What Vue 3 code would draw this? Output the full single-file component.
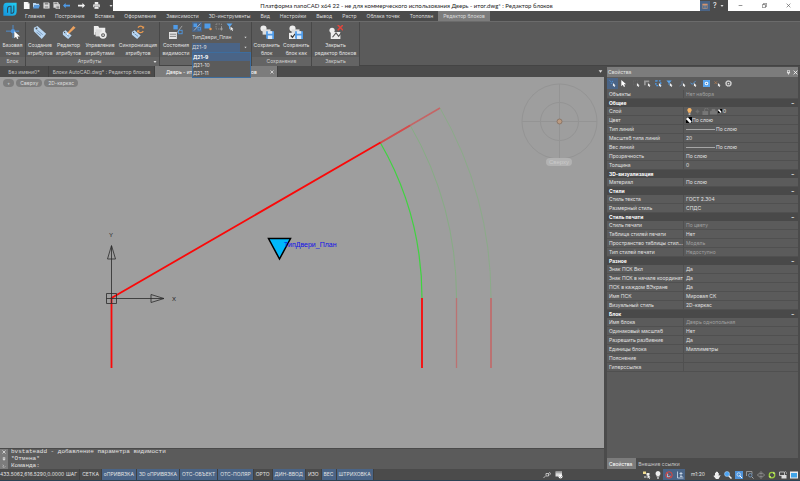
<script setup>
import { ref } from 'vue'

const cursor = '<path d="M9 7v8l2-2 1.500 3 1.500-1-1.500-2.500h2.500z" fill="#f4f4f4"/>'
const tag = '<path d="M1 3l4-2 10 9-5 6L1 7z" fill="#b9d7f3"/><path d="M5 6l6 5M4 8l5 4" stroke="#6c8caf" stroke-width="1"/><circle cx="4" cy="4" r="1.100" fill="#555"/>'
const tagSmall = '<path d="M1 8l3-2 7 6-4 4-6-5z" fill="#b9d7f3"/><path d="M4 10l4 3" stroke="#6c8caf" stroke-width="1"/><circle cx="3" cy="8.500" r=".8" fill="#555"/>'
const shapes = '<circle cx="4" cy="4" r="3.500" fill="#eee"/><rect x="3" y="5" width="9" height="6" fill="#ddd"/>'
const floppy = '<path d="M7 7h9v9H8l-1-1z" fill="#4f9be8"/><rect x="9" y="7" width="5" height="3" fill="#dceafa"/><rect x="9" y="12" width="5" height="4" fill="#dceafa"/>'
const icons = {
  point: '<path d="M8 0v15M0 7h15" stroke="#4f93da" stroke-width="1"/><circle cx="8" cy="7" r="2.500" fill="#4f93da"/><path d="M9.500 7v8l2-1.500 1.200 2.500 1.500-.7-1.200-2.300H16z" fill="#fff"/>',
  tag,
  tagEdit: tagSmall + '<path d="M6 9L13 1l2.500 2L8 10z" fill="#eca25f"/><path d="M6 9l-1 3 3-2z" fill="#fff"/>',
  tagManage: '<path d="M1 1h5l1 2h7v5H3v3H1z" fill="#eee"/><rect x="3" y="5" width="7" height="8" fill="#ddd"/><circle cx="11.500" cy="11.500" r="3.200" fill="#555" stroke="#eee" stroke-width="2"/><circle cx="11.500" cy="11.500" r="1" fill="#eee"/>',
  tagSync: tagSmall + '<path d="M8 3a3.500 3.500 0 0 1 6 0M14 7a3.500 3.500 0 0 1-6 0" fill="none" stroke="#e99a50" stroke-width="1.500"/><path d="M15 1v3h-3zM7 9V6h3z" fill="#e99a50"/>',
  states: '<rect x="5" y="0" width="5" height="5" fill="#4f9be8"/><path d="M15 1L9 9" stroke="#aaa"/><rect x="11" y="6" width="4" height="4" fill="none" stroke="#4f9be8"/><rect x="0" y="8" width="9" height="8" fill="#e4e4e4"/><path d="M1 10.500h7M1 13h7" stroke="#777"/>',
  saveBlock: shapes + floppy,
  saveAs: shapes + '<rect x="0" y="9" width="8" height="7" fill="#eee"/><path d="M2 12l2 2 3-4" fill="none" stroke="#333" stroke-width="1.400"/>' + floppy,
  closeBlock: '<circle cx="3.500" cy="6" r="3" fill="#eee"/><path d="M2 8h11v8H2z" fill="#eee"/><path d="M4 14l4-5 3 4 3-4" fill="none" stroke="#555" stroke-width="1.300"/><path d="M10 0l6 6M16 0l-6 6" stroke="#e0453c" stroke-width="1.800"/>',
  half: '<rect x="1" y="1" width="7" height="7" fill="#4f9be8"/><path d="M15 1L2 15" stroke="#ccc" stroke-width="1.500"/><rect x="10" y="9" width="5" height="5" fill="none" stroke="#4f9be8" stroke-width="1.500"/>',
  full: '<rect x="1" y="1" width="12" height="10" fill="#4f9be8"/><circle cx="13" cy="12" r="2.500" fill="#e99a50"/>',
  dashed: '<rect x="2" y="2" width="11" height="10" fill="none" stroke="#999" stroke-width="1.500" stroke-dasharray="3 2"/><path d="M13 8v7M10 12h6" stroke="#aaa" stroke-width="1.500"/>',
  funnel: '<path d="M1 1h12L8 7v6L6 11V7z" fill="#5ba6ee"/>' + cursor,
  page: '<path d="M2 0h9l4 4v12H2z" fill="#f8f8f8"/><path d="M11 0v4h4" fill="#bbb"/>',
  folder: '<path d="M0 2h6l2 2h6v3H4l-4 7z" fill="#b9d7f3"/><path d="M4 7h12l-3 8H0z" fill="#5799dc"/>',
  save: '<path d="M1 1h12l2 2v12H1z" fill="#ddd"/><rect x="4" y="1" width="8" height="5" fill="#888"/><rect x="4" y="9" width="8" height="6" fill="#aaa"/>',
  saveAll: '<path d="M1 0h10l2 2v11H1z" fill="#ddd"/><rect x="3" y="1" width="7" height="4" fill="#888"/><path d="M6 5h10v11H6z" fill="#ccc"/><rect x="8" y="10" width="6" height="5" fill="#888"/>',
  undo: '<path d="M0 8l6-6v4h10v4H6v4z" fill="#4f9be8"/>',
  redo: '<path d="M16 8l-6-6v4H0v4h10v4z" fill="#f4f4f4"/>',
  print: '<rect x="4" y="0" width="8" height="6" fill="#eee"/><rect x="0" y="5" width="16" height="7" rx="1" fill="#ccc"/><rect x="3" y="10" width="10" height="6" fill="#eee" stroke="#777"/>',
  addSel: '<path d="M1 1l5 4M4 8h3M8 2v3" stroke="#4f9be8" stroke-width="1.500"/>' + cursor,
  arrow: '<path d="M3 0v14l3.500-3 2.500 5 2.500-1.500-2.500-5h5z" fill="#fff"/>',
  frame: '<rect x="1" y="2" width="10" height="9" fill="none" stroke="#777" stroke-dasharray="2 2"/>' + cursor,
  gray: '<path d="M0 1h12v4H4v7H0z" fill="#999"/>' + cursor,
  blueFrame: '<path d="M2 2h11v11H2z" fill="none" stroke="#4f9be8" stroke-width="3" stroke-dasharray="4 3"/>' + cursor,
  line: '<path d="M7 2v8L1 14" fill="none" stroke="#6d87a5" stroke-width="1.500"/>' + cursor,
  check: '<path d="M1 6l4 4 8-8" fill="none" stroke="#4f9be8" stroke-width="2"/>' + cursor,
  target: '<rect width="16" height="16" fill="#5ba6ee"/><circle cx="8" cy="8" r="4" fill="#fff"/><circle cx="8" cy="8" r="1.800" fill="#4780bd"/>',
  cross: '<path d="M1 3l6 6M7 3L1 9" stroke="#bf8252" stroke-width="1.500"/>' + cursor,
  gear: '<circle cx="8" cy="8" r="5.500" fill="#555" stroke="#ccc" stroke-width="3" /><circle cx="8" cy="8" r="7" fill="none" stroke="#ccc" stroke-width="1.500" stroke-dasharray="2 2"/><circle cx="8" cy="8" r="2" fill="#ddd"/>',
  bulb: '<path d="M8 0a5 5 0 0 1 3 9v2H5V9a5 5 0 0 1 3-9z" fill="#f3b368"/><rect x="6" y="12" width="4" height="4" fill="#bbb"/>',
  bulbWhite: '<path d="M8 0a5 5 0 0 1 3 9v2H5V9a5 5 0 0 1 3-9z" fill="#eee"/><rect x="6" y="12" width="4" height="4" fill="#aaa"/>',
  sun: '<circle cx="8" cy="8" r="3" fill="#777"/><path d="M8 2v12M2 8h12" stroke="#6c6c6c"/>',
  lock: '<rect x="1" y="7" width="13" height="9" fill="#777"/><path d="M6 7V4a4 4 0 0 1 8 0" fill="none" stroke="#777" stroke-width="2"/>',
  printer: '<rect x="4" y="2" width="8" height="5" fill="#777"/><rect x="0" y="6" width="16" height="9" rx="2" fill="#777"/>',
  swatch: '<rect width="16" height="16" fill="#000"/><path d="M1 1v5l8 9h5v-4L7 1z" fill="#fff"/><path d="M5 1h10v9z" fill="#000"/>',
  chain: '<path d="M1 14l5-5M6 9V5h5v5H6" fill="none" stroke="#ddd" stroke-width="1.500"/><path d="M11 5c4-5 5 2 2 3" fill="none" stroke="#ddd" stroke-width="1.500"/>',
  sheet: '<rect x="1" y="1" width="13" height="10" fill="#ddd"/><path d="M1 3.500h13" stroke="#555"/><circle cx="11" cy="11" r="4" fill="#fff"/><path d="M9 11l2 2 3-3" fill="none" stroke="#555"/>',
  pick: '<rect x="0" y="1" width="6" height="5" fill="#f0dc90"/><rect x="7" y="4" width="6" height="5" fill="#eee"/><path d="M2 10h5v4H2z" fill="#999"/>' + cursor,
  noSnap: '<path d="M5 4v8l6-2" fill="none" stroke="#c9d6e6" stroke-width="1.500"/><circle cx="8" cy="8" r="6.500" fill="none" stroke="#e0453c" stroke-width="2"/><path d="M3 3l10 10" stroke="#e0453c" stroke-width="1.500"/>',
  axes: '<path d="M3 1v13h12" fill="none" stroke="#dce8f5" stroke-width="1.500"/><path d="M10 2v8M7 5h6M8 11h5" stroke="#dce8f5" stroke-width="1.500"/>',
  hand: '<path d="M4 9V4h1.500v4V2H7v6V1h1.500v7V2H10v7V4h1.500v6l2.500-2 1 1-4 7H6L1 10l1-1z" fill="#eee"/>',
  zoom: '<path d="M9 9l6 6" stroke="#eee" stroke-width="3"/><circle cx="6" cy="6" r="5" fill="#4ba3f2" stroke="#c5dff9"/>',
  zoomAll: '<rect width="16" height="16" fill="#4f93da"/><path d="M9 9l5 5" stroke="#fff" stroke-width="2"/><circle cx="7.500" cy="7" r="3.500" fill="none" stroke="#dcebfa" stroke-width="1.500"/>',
  zoomWin: '<path d="M1 10V1h11v5" fill="none" stroke="#aaa" stroke-width="1.500"/><path d="M11 11l4 4" stroke="#aaa" stroke-width="2"/><circle cx="8.500" cy="8.500" r="3.500" fill="#4b4b4b" stroke="#7aa7d6" stroke-width="1.500"/>',
  orbit: '<path d="M8 1v14M5 4l3-3 3 3M5 12l3 3 3-3" fill="none" stroke="#999"/><ellipse cx="8" cy="8" rx="7" ry="3" fill="none" stroke="#999" stroke-width="1.500"/>',
  regen: '<circle cx="8" cy="8" r="5.500" fill="none" stroke="#9ccf3c" stroke-width="2.500"/><path d="M11 1l4 4-5 1zM5 15l-4-4 5-1z" fill="#c5ec75"/>',
  views: '<path d="M1 2h10v7H1z" fill="none" stroke="#ddd" stroke-width="1.500"/><rect x="5" y="8" width="10" height="7" fill="#ddd"/><path d="M12 1c3 0 3 2 3 5" fill="none" stroke="#ddd"/>',
  screen: '<rect x="0" y="1" width="16" height="14" fill="#eee"/><rect x="2" y="4" width="12" height="9" fill="#41a5e8"/>',
  panel: '<rect x="1" y="2" width="14" height="3" fill="#e99a6a"/><path d="M2 6h12v9H2z" fill="none" stroke="#d99a70" stroke-width="1.500"/><path d="M6 6v9M10 6v9" stroke="#bbb"/>',
  pin: '<path d="M5 1h6v8H5zM3 9h10M8 9v6" fill="none" stroke="#fff" stroke-width="2"/>',
  close: '<path d="M2 2l12 12M14 2L2 14" stroke="#fff" stroke-width="2.500"/>',
  wrench: '<path d="M2 3l6 4-6 3M3 13h7l4-4" fill="none" stroke="#ddd" stroke-width="1.800"/>',
  down: '<path d="M2 4h12l-6 8z" fill="#ddd"/>'
}

const quick = ['page', 'folder', 'save', 'saveAll', 'undo', 'redo', 'print']
const menu = ['Главная', 'Построение', 'Вставка', 'Оформление', 'Зависимости', '3D-инструменты', 'Вид', 'Настройки', 'Вывод', 'Растр', 'Облака точек', 'Топоплан', 'Редактор блоков']
const attrs = [
  ['tag', 'Создание', 'атрибутов'],
  ['tagEdit', 'Редактор', 'атрибутов'],
  ['tagManage', 'Управление', 'атрибутами'],
  ['tagSync', 'Синхронизация', 'атрибутов']
]
const states = ['Д21-9', 'Д21-10', 'Д21-11']
const state = ref('Д21-9')
const selTools = ['addSel', 'arrow', 'frame', 'gray', 'blueFrame', 'funnel', 'line', 'check', 'target', 'cross', 'gear']

const groups = [
  { rows: [{ n: 'Объекты', v: 'Нет набора', dim: true }] },
  {
    title: 'Общие',
    rows: [
      { n: 'Слой', v: '0', layer: true },
      { n: 'Цвет', v: 'По слою', swatch: true },
      { n: 'Тип линий', v: 'По слою', line: true },
      { n: 'Масштаб типа линий', v: '20' },
      { n: 'Вес линий', v: 'По слою', line: true },
      { n: 'Прозрачность', v: 'По слою' },
      { n: 'Толщина', v: '0' }
    ]
  },
  { title: '3D-визуализация', rows: [{ n: 'Материал', v: 'По слою' }] },
  { title: 'Стили', rows: [{ n: 'Стиль текста', v: 'ГОСТ 2.304' }, { n: 'Размерный стиль', v: 'СПДС' }] },
  {
    title: 'Стиль печати',
    rows: [
      { n: 'Стиль печати', v: 'По цвету', dim: true },
      { n: 'Таблица стилей печати', v: 'Нет' },
      { n: 'Пространство таблицы стил...', v: 'Модель', dim: true },
      { n: 'Тип стилей печати', v: 'Недоступно', dim: true }
    ]
  },
  {
    title: 'Разное',
    rows: [
      { n: 'Знак ПСК Вкл', v: 'Да' },
      { n: 'Знак ПСК в начале координат', v: 'Да' },
      { n: 'ПСК в каждом ВЭкране', v: 'Да' },
      { n: 'Имя ПСК', v: 'Мировая СК' },
      { n: 'Визуальный стиль', v: '2D-каркас' }
    ]
  },
  {
    title: 'Блок',
    rows: [
      { n: 'Имя блока', v: 'Дверь однопольная', dim: true },
      { n: 'Одинаковый масштаб', v: 'Нет' },
      { n: 'Разрешить разбиение', v: 'Да' },
      { n: 'Единицы блока', v: 'Миллиметры' },
      { n: 'Пояснение', v: '' },
      { n: 'Гиперссылка', v: '' }
    ]
  }
]

const modes = ref([
  ['ШАГ', false], ['СЕТКА', false], ['оПРИВЯЗКА', true], ['3D оПРИВЯЗКА', true], ['ОТС-ОБЪЕКТ', true],
  ['ОТС-ПОЛЯР', true], ['ОРТО', false], ['ДИН-ВВОД', true], ['ИЗО', false], ['ВЕС', true], ['ШТРИХОВКА', true]
])
const viewTools = ['hand', 'zoom', 'zoomAll', 'zoomWin', 'orbit', 'regen', 'views', 'screen']
</script>

<template>
  <div class="app">
    <header class="head">
      <svg class="logo" viewBox="0 0 40 40">
        <defs>
          <linearGradient id="lg" x1="0" y1="1" x2="1" y2="0">
            <stop offset="0" stop-color="#1593dc" />
            <stop offset="1" stop-color="#22d0f4" />
          </linearGradient>
        </defs>
        <path d="M10 2h29v25q0 12-12 12H1V13Q1 2 10 2z" fill="url(#lg)" />
        <path d="M13 31V19q0-7 7-7h3v20h3q5 0 5-6V10" fill="none" stroke="#274a60" stroke-width="3" />
      </svg>
      <div class="headmain">
        <div class="titlebar">
          <div class="quick">
            <button v-for="q in quick" :key="q" class="qbtn" :class="q" :aria-label="q">
              <svg viewBox="0 0 16 16" v-html="icons[q]"></svg>
            </button>
            <svg class="caret" viewBox="0 0 16 16" v-html="icons.down"></svg>
          </div>
          <h1 class="title">Платформа nanoCAD x64 22 - не для коммерческого использования Дверь - итог.dwg* : Редактор блоков</h1>
          <div class="help">
            <button class="on" aria-label="panel"><svg viewBox="0 0 16 16" v-html="icons.panel"></svg></button>
            <button>?</button>
            <svg class="caret" viewBox="0 0 16 16" v-html="icons.down"></svg>
          </div>
          <div class="win">
            <button aria-label="minimize"><svg viewBox="0 0 16 16"><path d="M2 8h12" stroke="#555" stroke-width="2" /></svg></button>
            <button aria-label="restore"><svg viewBox="0 0 16 16"><path d="M1 5h10v10H1zM5 5V1h10v10h-4" fill="none" stroke="#555" stroke-width="2" /></svg></button>
            <button aria-label="close"><svg viewBox="0 0 16 16"><path d="M2 2l12 12M14 2L2 14" stroke="#555" stroke-width="2" /></svg></button>
          </div>
        </div>
        <nav class="menu">
          <a v-for="(m, i) in menu" :key="m" href="#" :class="{ active: i === 12 }">{{ m }}</a>
        </nav>
      </div>
    </header>

    <section class="ribbon">
      <div class="group g-block">
        <div class="tools">
          <button class="big"><svg viewBox="0 0 16 16" v-html="icons.point"></svg><span>Базовая<br />точка</span></button>
        </div>
        <div class="gname">Блок</div>
      </div>
      <div class="group g-attr">
        <div class="tools">
          <button v-for="a in attrs" :key="a[1]" class="big"><svg viewBox="0 0 16 16" v-html="icons[a[0]]"></svg><span>{{ a[1] }}<br />{{ a[2] }}</span></button>
        </div>
        <div class="gname more">Атрибуты<svg class="caret" viewBox="0 0 16 16" v-html="icons.down"></svg></div>
      </div>
      <div class="group g-vis">
        <div class="tools">
          <button class="big"><svg viewBox="0 0 16 16" v-html="icons.states"></svg><span>Состояния<br />видимости</span></button>
          <div class="vis">
            <div class="mini">
              <button class="on" aria-label="half"><svg viewBox="0 0 16 16" v-html="icons.half"></svg></button>
              <button aria-label="full"><svg viewBox="0 0 16 16" v-html="icons.full"></svg></button>
              <button aria-label="dashed"><svg viewBox="0 0 16 16" v-html="icons.dashed"></svg></button>
              <button aria-label="filter"><svg viewBox="0 0 16 16" v-html="icons.funnel"></svg></button>
            </div>
            <div class="combo">
              <select aria-label="parameter"><option>ТипДвери_План</option></select><svg viewBox="0 0 16 16" v-html="icons.down"></svg>
            </div>
            <div class="combo open">
              <select v-model="state" aria-label="state"><option v-for="s in states" :key="s">{{ s }}</option></select><svg viewBox="0 0 16 16" v-html="icons.down"></svg>
              <ul class="drop">
                <li v-for="s in states" :key="s" :class="{ sel: s === state }" @click="state = s">{{ s }}</li>
              </ul>
            </div>
          </div>
        </div>
        <div class="gname"></div>
      </div>
      <div class="group g-save">
        <div class="tools">
          <button class="big"><svg viewBox="0 0 16 16" v-html="icons.saveBlock"></svg><span>Сохранить<br />блок</span></button>
          <button class="big"><svg viewBox="0 0 16 16" v-html="icons.saveAs"></svg><span>Сохранить<br />блок как</span></button>
        </div>
        <div class="gname">Сохранение</div>
      </div>
      <div class="group g-close">
        <div class="tools">
          <button class="big"><svg viewBox="0 0 16 16" v-html="icons.closeBlock"></svg><span>Закрыть<br />редактор блоков</span></button>
        </div>
        <div class="gname">Закрыть</div>
      </div>
    </section>

    <div class="work">
      <main class="left">
        <div class="docs">
          <button class="doc d1">Без имени0*</button>
          <button class="doc d2">Блоки AutoCAD.dwg* : Редактор блоков</button>
          <button class="doc d3 active"><span>Дверь - итог.dwg* : Редактор блоков</span><svg viewBox="0 0 16 16" v-html="icons.close"></svg></button>
          <svg class="doclist" viewBox="0 0 16 16" v-html="icons.down"></svg>
        </div>
        <div class="canvas">
          <div class="pills"><button>+</button><button>Сверху</button><button>2D-каркас</button></div>
          <svg class="drawing" viewBox="0 0 604 371" preserveAspectRatio="xMinYMin meet">
            <g fill="none">
              <g stroke="#949494" stroke-width="1">
                <circle cx="559.500" cy="44.500" r="37.500" /><circle cx="559.500" cy="44.500" r="19" />
                <path d="M522 44.500h75M559.500 7v75" />
              </g>
              <circle cx="559.500" cy="44.500" r="2.500" fill="#bb9a80" stroke="#8c7768" />
              <path d="M456.500 221A345.500 345.500 0 0 0 410 48" stroke="#86ad84" stroke-width="1" />
              <path d="M491 221A380 380 0 0 0 440 31" stroke="#8bab89" stroke-width="1" />
              <path d="M422 221A311 311 0 0 0 380.500 66" stroke="#3fd43f" stroke-width="1.200" />
              <path d="M380 66L440 31" stroke="#c56565" stroke-width="1.500" />
              <path d="M380 66L410 48.500" stroke="#d44c4c" stroke-width="1.500" />
              <path d="M456.500 221v70" stroke="#bb7272" stroke-width="1.300" />
              <path d="M491 221v70" stroke="#bb7272" stroke-width="2" />
              <path d="M422 221v70M111.500 291v-70L380.500 65.500" stroke="#fb0808" stroke-width="1.800" />
              <g stroke="#2a2a2a" stroke-width=".8">
                <path d="M111.500 226V169M106.500 221.500H164M106.500 216.500h10v10h-10z" />
                <path d="M111.500 168.500l-4 13.500h8zM164 221.500l-13-4v8z" />
              </g>
              <path d="M268.500 161.500h22l-11 20.500z" fill="#00b8fb" stroke="#000" stroke-width="1.500" />
            </g>
            <text class="axis" x="109" y="160">Y</text>
            <text class="axis" x="172" y="224">X</text>
            <text class="label" x="284" y="170">ТипДвери_План</text>
            <rect x="546" y="81" width="26" height="8" rx="4" fill="#b2b2b2" />
            <text class="cube" x="559" y="87">Сверху</text>
          </svg>
        </div>
        <div class="cmd">
          <div class="cmdbar">
            <svg viewBox="0 0 16 16" v-html="icons.close"></svg>
            <svg viewBox="0 0 16 16" v-html="icons.pin"></svg>
            <svg viewBox="0 0 16 16" v-html="icons.wrench"></svg>
          </div>
          <div class="cmdtext">
            <div class="log"><p>bvstateadd - добавление параметра видимости</p><p>*Отмена*</p></div>
            <div class="prompt"><label for="cmd">Команда:</label><input id="cmd" type="text" /></div>
          </div>
        </div>
      </main>

      <aside class="props">
        <div class="ptitle"><h2>Свойства</h2><span class="pbtns"><svg viewBox="0 0 16 16" v-html="icons.pin"></svg><svg viewBox="0 0 16 16" v-html="icons.close"></svg></span></div>
        <div class="ptools">
          <button v-for="(s, i) in selTools" :key="s" :class="{ on: i === 0, gap: [2, 6, 8].includes(i) }" :aria-label="s"><svg viewBox="0 0 16 16" v-html="icons[s]"></svg></button>
        </div>
        <table>
          <colgroup><col class="c1" /><col /></colgroup>
          <tbody v-for="(g, gi) in groups" :key="gi">
            <tr v-if="g.title" class="hd"><th colspan="2"><div>{{ g.title }}<span>–</span></div></th></tr>
            <tr v-for="r in g.rows" :key="r.n">
              <th scope="row">{{ r.n }}</th>
              <td :class="{ dim: r.dim }">
                <div class="val">
                  <template v-if="r.layer">
                    <svg v-for="k in ['bulb', 'sun', 'lock', 'printer']" :key="k" class="ly" viewBox="0 0 16 16" v-html="icons[k]"></svg>
                    <svg class="sw small" viewBox="0 0 16 16" v-html="icons.swatch"></svg>
                  </template>
                  <svg v-if="r.swatch" class="sw" viewBox="0 0 16 16" v-html="icons.swatch"></svg>
                  <i v-if="r.line" class="ln"></i>{{ r.v }}
                </div>
              </td>
            </tr>
          </tbody>
        </table>
        <div class="ptabs"><button class="active">Свойства</button><button>Внешние ссылки</button></div>
      </aside>
    </div>

    <footer class="status">
      <span class="coords">433.5062,616.5290,0.0000</span>
      <div class="modes">
        <button v-for="m in modes" :key="m[0]" :class="{ on: m[1] }" @click="m[1] = !m[1]">{{ m[0] }}</button>
      </div>
      <div class="mid"><button aria-label="link"><svg viewBox="0 0 16 16" v-html="icons.chain"></svg></button><button aria-label="sheet"><svg viewBox="0 0 16 16" v-html="icons.sheet"></svg></button></div>
      <div class="snap">
        <button aria-label="pick"><svg viewBox="0 0 16 16" v-html="icons.pick"></svg></button>
        <button aria-label="light"><svg viewBox="0 0 16 16" v-html="icons.bulbWhite"></svg></button>
        <button class="on" aria-label="no snap"><svg viewBox="0 0 16 16" v-html="icons.noSnap"></svg></button>
        <button class="on" aria-label="axes"><svg viewBox="0 0 16 16" v-html="icons.axes"></svg></button>
      </div>
      <span class="scale">m1:20</span>
      <div class="views"><button v-for="v in viewTools" :key="v" :aria-label="v"><svg viewBox="0 0 16 16" v-html="icons[v]"></svg></button></div>
    </footer>
  </div>
</template>

<style>
body {
  margin: 0;
  background: #4b4b4b;
}
</style>

<style scoped>
* {
  box-sizing: border-box;
}
.app {
  display: flex;
  flex-direction: column;
  height: 100vh;
  overflow: hidden;
  background: #4b4b4b;
  color: #e2e2e2;
  font: 5px/8px Inter, "Noto Sans", sans-serif;
  white-space: nowrap;
}
button {
  padding: 0;
  border: 0;
  background: none;
  color: inherit;
  font: inherit;
}
svg {
  display: block;
  flex: none;
}
h1, h2, p, ul {
  margin: 0;
  padding: 0;
  font: inherit;
}
.on {
  background: #4a6486;
}
.caret {
  width: 4px;
  height: 4px;
}

.head {
  display: flex;
  height: 21px;
  flex: none;
}
.logo {
  width: 14px;
  height: 14px;
  margin: 2px 3px 0 3px;
}
.headmain {
  flex: 1;
  display: flex;
  flex-direction: column;
  min-width: 0;
}
.titlebar {
  display: flex;
  height: 11px;
}
.quick {
  display: flex;
  align-items: center;
  width: 93px;
  padding-left: 3px;
  gap: 3px;
}
.qbtn svg {
  width: 7px;
  height: 7px;
}
.qbtn.redo, .qbtn.print {
  margin-left: 5px;
}
.quick .caret {
  margin-left: 6px;
}
.title {
  flex: 1;
  background: #fff;
  color: #222;
  font-family: Lato, "Noto Sans", sans-serif;
  font-size: 6px;
  text-align: center;
  line-height: 11px;
}
.help {
  display: flex;
  align-items: center;
  width: 28px;
  gap: 3px;
}
.help button {
  height: 10px;
  color: #fff;
  font-size: 7px;
}
.help button svg {
  width: 6px;
  height: 6px;
  margin: 0 2px;
}
.win {
  display: flex;
  width: 72px;
  background: #fff;
  justify-content: space-around;
}
.win svg {
  width: 5px;
  height: 5px;
}
.menu {
  display: flex;
  height: 10px;
  line-height: 10px;
}
.menu a {
  padding: 0 5px;
  color: #dedede;
  text-decoration: none;
}
.menu a.active {
  background: #7c7c7c;
}

.ribbon {
  display: flex;
  flex: none;
  height: 45px;
  background: #5b5b5b;
  border-top: 1px solid #6b6b6b;
  border-bottom: 1px solid #444;
}
.group {
  display: flex;
  flex-direction: column;
  border-right: 1px solid #484848;
}
.g-block { width: 26px; }
.g-attr { width: 134px; }
.g-vis { width: 92px; }
.g-save { width: 60px; }
.g-close { width: 48px; }
.tools {
  display: flex;
  flex: 1;
}
.g-attr .tools {
  display: grid;
  grid-template-columns: 28px 29px 34px 42px;
}
.big {
  flex: 1;
  display: flex;
  flex-direction: column;
  align-items: center;
  padding-top: 3px;
  line-height: 8px;
}
.big svg {
  width: 14px;
  height: 14px;
  margin-bottom: 2px;
}
.gname {
  height: 9px;
  line-height: 9px;
  text-align: center;
  background: #646464;
  color: #cfcfcf;
}
.more {
  display: grid;
  grid-template-columns: 1fr 6px;
  align-items: center;
}
.vis {
  width: 59px;
  display: flex;
  flex-direction: column;
}
.mini {
  display: flex;
  gap: 1px;
  height: 10px;
}
.mini button {
  padding: 0 1px;
}
.mini svg {
  width: 8px;
  height: 8px;
}
.combo {
  position: relative;
  display: flex;
  height: 10px;
  align-items: center;
}
.combo select {
  flex: 1;
  min-width: 0;
  height: 9px;
  padding: 0;
  border: 0;
  appearance: none;
  background: none;
  color: #dedede;
  font: inherit;
}
.combo svg {
  width: 3px;
  height: 3px;
  margin: 0 4px;
}
.open select {
  background: #4a6486;
}
.drop {
  position: absolute;
  z-index: 2;
  top: 10px;
  left: 0;
  right: 0;
  list-style: none;
  background: #5b5b5b;
  border: 1px solid #3d6d9e;
}
.drop .sel {
  background: #4a6486;
  font-weight: bold;
  color: #fff;
}

.work {
  display: flex;
  flex: 1;
  min-height: 0;
}
.left {
  display: flex;
  flex-direction: column;
  flex: 1;
  min-width: 0;
}
.docs {
  display: flex;
  height: 11px;
  flex: none;
  color: #c4c4c4;
}
.doc {
  border-right: 1px solid #404040;
}
.d1 { width: 49px; }
.d2 { width: 106px; }
.d3 {
  display: flex;
  justify-content: space-between;
  align-items: center;
  width: 123px;
  padding: 0 3px 0 11px;
}
.d3 svg {
  width: 4px;
  height: 4px;
}
.doc.active {
  background: #7c7c7c;
  color: #fff;
}
.doclist {
  width: 5px;
  height: 5px;
  margin: 3px 1px 0 auto;
}
.canvas {
  position: relative;
  flex: 1;
  min-height: 0;
  background: #9e9e9e;
}
.drawing {
  width: 100%;
  height: 100%;
}
.pills {
  position: absolute;
  top: 2px;
  left: 3px;
  display: flex;
  gap: 2px;
}
.pills button {
  padding: 0 4px;
  border-radius: 4px;
  background: #7d7d7d;
  color: #dedede;
}
.axis {
  font: 6px "Liberation Sans", sans-serif;
  fill: #222;
}
.label {
  font: 7px "Liberation Sans", sans-serif;
  fill: #0f0fe8;
}
.cube {
  font: 6px "Liberation Sans", sans-serif;
  fill: #cacaca;
  text-anchor: middle;
}
.cmd {
  display: flex;
  flex: none;
  height: 21px;
  border-top: 1px solid #4a4a4a;
  background: #5b5b5b;
}
.cmdbar {
  display: flex;
  flex-direction: column;
  justify-content: space-around;
  align-items: center;
  width: 8px;
  background: #7c7c7c;
}
.cmdbar svg {
  width: 4px;
  height: 4px;
}
.cmdtext {
  flex: 1;
  padding-left: 3px;
  font: 6px/7px "Liberation Mono", monospace;
}
.log {
  height: 13px;
  display: flex;
  flex-direction: column;
  justify-content: flex-end;
  overflow: hidden;
}
.prompt {
  display: flex;
  height: 7px;
}
.prompt input {
  flex: 1;
  padding: 0;
  border: 0;
  background: none;
  color: inherit;
  font: inherit;
  outline: 0;
}

.props {
  display: flex;
  flex-direction: column;
  flex: none;
  width: 196px;
  padding: 1px 2px 0 1px;
  border-left: 2px solid #4b4b4b;
  background: #4b4b4b;
}
.ptitle {
  display: flex;
  justify-content: space-between;
  align-items: center;
  height: 10px;
  flex: none;
  padding-left: 1px;
  background: #7c7c7c;
}
.pbtns {
  display: flex;
  gap: 2px;
}
.pbtns svg {
  width: 5px;
  height: 5px;
}
.ptools {
  display: flex;
  height: 13px;
  flex: none;
  align-items: center;
  background: #5b5b5b;
}
.ptools button {
  padding: 2px;
}
.ptools svg {
  width: 7px;
  height: 7px;
}
.ptools .gap {
  margin-left: 2px;
}
table {
  width: 100%;
  table-layout: fixed;
  border-collapse: separate;
  border-spacing: 0;
}
.c1 {
  width: 77px;
}
tr {
  height: 9px;
}
th, td {
  height: 9px;
  padding: 0 0 0 2px;
  border-bottom: 1px solid #505050;
  background: #5b5b5b;
  font-weight: normal;
  text-align: left;
  line-height: 8px;
}
th {
  border-right: 1px solid #505050;
}
td.dim {
  color: #a0a0a0;
}
.hd, .hd th {
  height: 8px;
}
.hd th {
  border: 0;
  background: #494949;
  color: #fff;
  font-weight: bold;
}
.hd div {
  display: flex;
  justify-content: space-between;
  padding-right: 4px;
}
.val {
  display: flex;
  align-items: center;
  height: 8px;
}
.ly {
  width: 7px;
  height: 7px;
  margin-right: 1px;
}
.sw {
  width: 6px;
  height: 6px;
}
.sw.small {
  width: 4px;
  height: 4px;
  margin-right: 1px;
}
.ln {
  width: 29px;
  height: 1px;
  background: #a6a6a6;
  margin-right: 1px;
}
.ptabs {
  display: flex;
  flex: 1;
  align-items: flex-end;
  background: linear-gradient(to top, #4b4b4b 11px, #5b5b5b 11px);
}
.ptabs button {
  height: 11px;
  padding: 0 2px;
  color: #c4c4c4;
}
.ptabs .active {
  padding-right: 4px;
  background: #7c7c7c;
  color: #fff;
}

.status {
  display: flex;
  flex: none;
  align-items: stretch;
  height: 12px;
  border-bottom: 1px solid #2c4254;
  line-height: 11px;
}
.coords {
  width: 64px;
}
.modes {
  display: flex;
}
.modes button {
  padding: 0 2px;
  border-right: 1px solid #404040;
}
.status svg {
  width: 8px;
  height: 8px;
}
.mid, .snap, .views {
  display: flex;
  align-items: center;
}
.mid {
  margin-left: auto;
  gap: 4px;
  margin-right: 78px;
}
.snap button {
  display: grid;
  place-items: center;
  width: 11px;
  height: 11px;
}
.scale {
  width: 28px;
  padding-left: 6px;
}
.views {
  gap: 3px;
  padding-right: 2px;
}
</style>
